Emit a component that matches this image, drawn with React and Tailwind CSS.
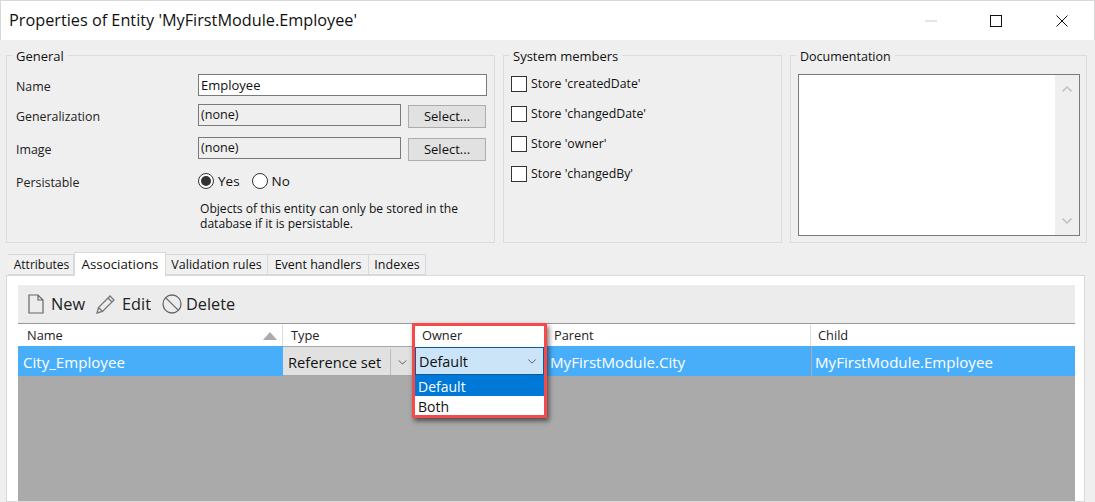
function Legend({ children, className = "text-[13px]" }) {
  return <span className={`absolute left-[5px] top-[-8px] bg-[#efefef] px-[4px] leading-[16px] text-[#111] ${className}`}>{children}</span>;
}
function Field({ label, children, h = "h-[30px]" }) {
  return (
    <div className={`flex items-center ${h}`}>
      <span className="w-[182px] shrink-0 pt-[4px] text-[12.4px] text-[#222]">{label}</span>
      {children}
    </div>
  );
}
function ReadOnly() {
  return (
    <>
      <div className="flex h-[22px] w-[203px] shrink-0 items-center border border-[#7a7a7a] bg-[#efefef] pl-[2px] pt-[1px] text-[12.6px] text-[#111]">(none)</div>
      <div className="ml-[7px] mt-[2px] flex h-[23px] w-[78px] shrink-0 items-center justify-center border border-[#adadad] bg-[#e1e1e1] pt-[1px] text-[13px] text-[#111]">Select...</div>
    </>
  );
}
function Check({ label }) {
  return (
    <div className="flex h-[30px] items-center gap-[4px] text-[12.3px] text-[#111]">
      <span className="h-[16px] w-[16px] border border-[#333] bg-white" />
      {label}
    </div>
  );
}
function Tab({ children, active, className }) {
  return active ? (
    <div className={`z-10 -mb-px flex h-[24px] items-start justify-center border border-b-0 border-[#d9d9d9] bg-white pt-[2px] text-[13.3px] text-[#111] ${className}`}>{children}</div>
  ) : (
    <div className={`flex h-[21px] items-center justify-center border border-l-0 border-[#d9d9d9] bg-[#f0f0f0] pt-[1px] text-[12.5px] text-[#111] ${className}`}>{children}</div>
  );
}
function Chevron({ className, color = "#444", width = 1 }) {
  return (
    <svg viewBox="0 0 10 6" className={className} fill="none" stroke={color} strokeWidth={width}>
      <path d="M0.5 0.5 L5 5 L9.5 0.5" />
    </svg>
  );
}
export default function App() {
  return (
    <div className="relative h-[502px] w-[1095px] overflow-hidden bg-[#efefef] font-['Open_Sans','Noto_Sans',sans-serif]">
      <div className="flex h-[40px] items-center justify-between border-t border-l border-r border-[#d8d8d8] bg-white pl-[8px]">
        <span className="text-[16.25px] text-[#111]">Properties of Entity 'MyFirstModule.Employee'</span>
        <div className="flex items-center">
          <svg width="12" height="2" className="mr-[53px]"><path d="M0 1H12" stroke="#ccc" /></svg>
          <svg width="12" height="12" className="mr-[54px]"><rect x="0.5" y="0.5" width="11" height="11" fill="none" stroke="#111" /></svg>
          <svg width="12" height="12" className="mr-[26px]"><path d="M0.5 0.5L11.5 11.5M11.5 0.5L0.5 11.5" stroke="#111" /></svg>
        </div>
      </div>
      <div className="flex gap-[8px] pl-[6px] pt-[15px]">
        <section className="relative h-[188px] w-[489px] border border-[#dcdcdc] pl-[9px] pt-[14px]">
          <Legend>General</Legend>
          <Field label="Name">
            <div className="flex h-[22px] w-[289px] shrink-0 items-center border border-[#7a7a7a] bg-white pl-[2px] pt-[1px] text-[13px] text-[#111]">Employee</div>
          </Field>
          <Field label="Generalization"><ReadOnly /></Field>
          <Field label="Image" h="h-[36px]"><ReadOnly /></Field>
          <Field label="Persistable">
            <div className="flex items-center text-[13.5px] text-[#111]">
              <span className="flex h-[16px] w-[16px] items-center justify-center rounded-full border border-[#333] bg-white">
                <span className="h-[10px] w-[10px] rounded-full bg-[#333]" />
              </span>
              <span className="ml-[4px]">Yes</span>
              <span className="ml-[12px] h-[16px] w-[16px] rounded-full border border-[#333] bg-white" />
              <span className="ml-[4px]">No</span>
            </div>
          </Field>
          <p className="ml-[184px] mt-[5px] w-[290px] text-[12.1px] leading-[15px] text-[#111]">Objects of this entity can only be stored in the database if it is persistable.</p>
        </section>
        <section className="relative h-[188px] w-[279px] border border-[#dcdcdc] pl-[7px] pt-[13px]">
          <Legend className="left-[4px] text-[13px]">System members</Legend>
          <Check label="Store 'createdDate'" />
          <Check label="Store 'changedDate'" />
          <Check label="Store 'owner'" />
          <Check label="Store 'changedBy'" />
        </section>
        <section className="relative h-[188px] w-[297px] border border-[#dcdcdc] px-[7px] pt-[18px]">
          <Legend className="mt-[1px] text-[12.5px]">Documentation</Legend>
          <div className="flex h-[162px] w-[282px] justify-end border border-[#7a7a7a] bg-white">
            <div className="flex w-[24px] flex-col items-center justify-between bg-[#efefef] py-[11px]">
              <Chevron className="h-[6px] w-[10px] rotate-180" color="#c4c4c4" width={1.6} />
              <Chevron className="h-[6px] w-[10px]" color="#c4c4c4" width={1.6} />
            </div>
          </div>
        </section>
      </div>
      <div className="mt-[9px] flex items-end pl-[8px]">
        <Tab className="w-[66px] border-l pl-[2px] text-[12px]">Attributes</Tab>
        <Tab active className="w-[92px]">Associations</Tab>
        <Tab className="w-[102px]">Validation rules</Tab>
        <Tab className="w-[101px]">Event handlers</Tab>
        <Tab className="w-[57px]">Indexes</Tab>
      </div>
      <div className="ml-[6px] h-[227px] w-[1079px] border border-[#d9d9d9] bg-white pl-[11px] pr-[9px] pt-[9px]">
        <div className="flex h-[38px] items-center bg-[#ececec] pl-[10px] text-[16.3px] text-[#222]">
          <svg width="16" height="20" viewBox="0 0 16 20" fill="none" stroke="#666" strokeWidth="1.2"><path d="M1 1H10L15 6V19H1Z M10 1V6H15" /></svg>
          <span className="ml-[7px]">New</span>
          <svg width="20" height="20" viewBox="0 0 20 20" fill="none" stroke="#777" strokeWidth="1.3" className="ml-[11px]"><path d="M1 19L2.5 13.5L14 2L18 6L6.5 17.5Z M2.5 13.5L6.5 17.5 M12 4L16 8" /></svg>
          <span className="ml-[6px]">Edit</span>
          <svg width="20" height="20" viewBox="0 0 20 20" fill="none" stroke="#666" strokeWidth="1.3" className="ml-[11px]"><circle cx="10" cy="10" r="9" /><path d="M3.6 3.6L16.4 16.4" /></svg>
          <span className="ml-[4px]">Delete</span>
        </div>
        <div className="flex h-[23px] border-t border-[#999] bg-white pt-[1px] text-[12.8px] text-[#222]">
          <div className="relative flex w-[265px] items-center border-r border-[#ddd] pl-[9px]">Name
            <svg width="14" height="8" className="absolute right-[5px] top-[7px]"><path d="M7 0L14 8H0Z" fill="#aaa" /></svg>
          </div>
          <div className="flex w-[131px] items-center border-r border-[#ddd] pl-[8px]">Type</div>
          <div className="flex w-[132px] items-center border-r border-[#ddd] pl-[9px]">Owner</div>
          <div className="flex w-[265px] items-center border-r border-[#ddd] pl-[8px]">Parent</div>
          <div className="flex flex-1 items-center pl-[7px]">Child</div>
        </div>
        <div className="flex h-[30px] bg-[#48aef9] text-[15.1px] text-white">
          <div className="flex w-[265px] items-center pl-[5px] pt-[2px]">City_Employee</div>
          <div className="flex w-[131px] items-center border-y border-[#a7a7a7] bg-[#e1e1e1] pt-[2px] text-[14.7px] text-[#111]">
            <span className="flex h-full w-[108px] items-center border-r border-[#bbb] pl-[5px]">Reference set</span>
            <Chevron className="ml-[7px] h-[5px] w-[9px]" />
          </div>
          <div className="w-[132px]" />
          <div className="flex w-[265px] items-center border-l border-[#ddd] pl-[3px] pt-[2px]">MyFirstModule.City</div>
          <div className="flex flex-1 items-center border-l border-[#aaa] pl-[3px] pt-[2px]">MyFirstModule.Employee</div>
        </div>
        <div className="h-[125px] bg-[#aaaaaa]" />
      </div>
      <div className="absolute left-[412px] top-[323px] h-[95px] w-[135px] border-[3px] border-[#f44a4a] shadow-[2px_3px_5px_rgba(0,0,0,0.55)]">
        <div className="flex h-[21px] items-center bg-white pb-[1px] pl-[7px] text-[12.8px] text-[#222]">Owner</div>
        <div className="flex h-[28px] items-center justify-between border border-[#0a5a9c] bg-[#cce4f7] pl-[3px] pr-[6px] pt-[1px] text-[14.4px] text-[#111]">Default<Chevron className="h-[5px] w-[10px]" /></div>
        <div className="flex h-[21px] items-center bg-[#0078d7] pl-[3px] pt-[1px] text-[14px] text-white">Default</div>
        <div className="flex h-[19px] items-center bg-white pl-[3px] pt-[1px] text-[14px] text-[#111]">Both</div>
      </div>
    </div>
  );
}
